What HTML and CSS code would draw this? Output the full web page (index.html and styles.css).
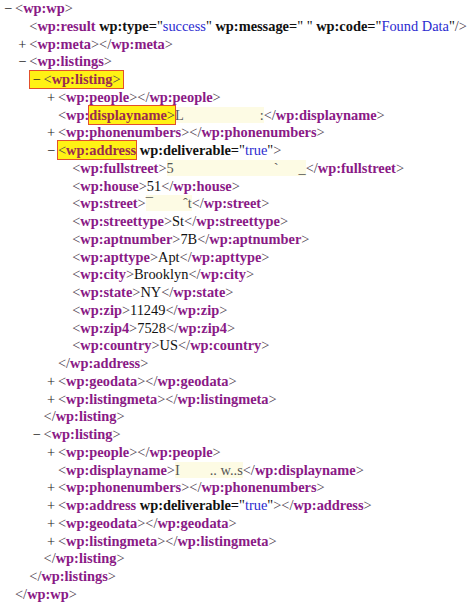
FILE: index.html
```html
<!DOCTYPE html>
<html lang="en">
<head>
    <meta charset="UTF-8">
    <title>wp.xml</title>
    <link rel="stylesheet" href="styles.css">
</head>
<body>
    <div class="tree">
        <div class="ln"><span class="pm">&minus;</span><span class="b">&lt;</span><span class="t">wp:wp</span><span class="b">&gt;</span></div>
        <div class="e">
            <div class="ln"><span class="b">&lt;</span><span class="t">wp:result</span> <span class="a">wp:type</span><span class="a">=</span>"<span class="v">success</span>" <span class="a">wp:message=</span>"&nbsp;" <span class="a">wp:code</span><span class="a">=</span>"<span class="v">Found Data</span>"<span class="b">/&gt;</span></div>
            <div class="ln"><span class="pm">+</span><span class="b">&lt;</span><span class="t">wp:meta</span><span class="b">&gt;&lt;/</span><span class="t">wp:meta</span><span class="b">&gt;</span></div>
            <div class="ln"><span class="pm">&minus;</span><span class="b">&lt;</span><span class="t">wp:listings</span><span class="b">&gt;</span></div>
            <div class="e">
                <div class="ln"><span class="hl lead"><span class="pm">&minus;</span><span class="b">&lt;</span><span class="t">wp:listing</span><span class="b">&gt;</span></span></div>
                <div class="e">
                    <div class="ln"><span class="pm">+</span><span class="b">&lt;</span><span class="t">wp:people</span><span class="b">&gt;&lt;/</span><span class="t">wp:people</span><span class="b">&gt;</span></div>
                    <div class="ln"><span class="b">&lt;</span><span class="t">wp:</span><span class="hl"><span class="t">displayname</span><span class="b">&gt;</span></span><span class="red">L<span class="gap w76"></span>:</span><span class="b">&lt;/</span><span class="t">wp:displayname</span><span class="b">&gt;</span></div>
                    <div class="ln"><span class="pm">+</span><span class="b">&lt;</span><span class="t">wp:phonenumbers</span><span class="b">&gt;&lt;/</span><span class="t">wp:phonenumbers</span><span class="b">&gt;</span></div>
                    <div class="ln"><span class="pm">&minus;</span><span class="hl"><span class="b">&lt;</span><span class="t">wp:address</span></span> <span class="a">wp:deliverable=</span>"<span class="v">true</span>"<span class="b">&gt;</span></div>
                    <div class="e">
                        <div class="ln"><span class="b">&lt;</span><span class="t">wp:fullstreet</span><span class="b">&gt;</span><span class="red">5<span class="gap w100"></span>&#96;<span class="gap w20"></span>_</span><span class="b">&lt;/</span><span class="t">wp:fullstreet</span><span class="b">&gt;</span></div>
                        <div class="ln"><span class="b">&lt;</span><span class="t">wp:house</span><span class="b">&gt;</span>51<span class="b">&lt;/</span><span class="t">wp:house</span><span class="b">&gt;</span></div>
                        <div class="ln"><span class="b">&lt;</span><span class="t">wp:street</span><span class="b">&gt;</span><span class="red">&#175;<span class="gap w30"></span>&#710;t</span><span class="b">&lt;/</span><span class="t">wp:street</span><span class="b">&gt;</span></div>
                        <div class="ln"><span class="b">&lt;</span><span class="t">wp:streettype</span><span class="b">&gt;</span>St<span class="b">&lt;/</span><span class="t">wp:streettype</span><span class="b">&gt;</span></div>
                        <div class="ln"><span class="b">&lt;</span><span class="t">wp:aptnumber</span><span class="b">&gt;</span>7B<span class="b">&lt;/</span><span class="t">wp:aptnumber</span><span class="b">&gt;</span></div>
                        <div class="ln"><span class="b">&lt;</span><span class="t">wp:apttype</span><span class="b">&gt;</span>Apt<span class="b">&lt;/</span><span class="t">wp:apttype</span><span class="b">&gt;</span></div>
                        <div class="ln"><span class="b">&lt;</span><span class="t">wp:city</span><span class="b">&gt;</span>Brooklyn<span class="b">&lt;/</span><span class="t">wp:city</span><span class="b">&gt;</span></div>
                        <div class="ln"><span class="b">&lt;</span><span class="t">wp:state</span><span class="b">&gt;</span>NY<span class="b">&lt;/</span><span class="t">wp:state</span><span class="b">&gt;</span></div>
                        <div class="ln"><span class="b">&lt;</span><span class="t">wp:zip</span><span class="b">&gt;</span>11249<span class="b">&lt;/</span><span class="t">wp:zip</span><span class="b">&gt;</span></div>
                        <div class="ln"><span class="b">&lt;</span><span class="t">wp:zip4</span><span class="b">&gt;</span>7528<span class="b">&lt;/</span><span class="t">wp:zip4</span><span class="b">&gt;</span></div>
                        <div class="ln"><span class="b">&lt;</span><span class="t">wp:country</span><span class="b">&gt;</span>US<span class="b">&lt;/</span><span class="t">wp:country</span><span class="b">&gt;</span></div>
                    </div>
                    <div class="ln"><span class="b">&lt;/</span><span class="t">wp:address</span><span class="b">&gt;</span></div>
                    <div class="ln"><span class="pm">+</span><span class="b">&lt;</span><span class="t">wp:geodata</span><span class="b">&gt;&lt;/</span><span class="t">wp:geodata</span><span class="b">&gt;</span></div>
                    <div class="ln"><span class="pm">+</span><span class="b">&lt;</span><span class="t">wp:listingmeta</span><span class="b">&gt;&lt;/</span><span class="t">wp:listingmeta</span><span class="b">&gt;</span></div>
                </div>
                <div class="ln"><span class="b">&lt;/</span><span class="t">wp:listing</span><span class="b">&gt;</span></div>
                <div class="ln"><span class="pm">&minus;</span><span class="b">&lt;</span><span class="t">wp:listing</span><span class="b">&gt;</span></div>
                <div class="e">
                    <div class="ln"><span class="pm">+</span><span class="b">&lt;</span><span class="t">wp:people</span><span class="b">&gt;&lt;/</span><span class="t">wp:people</span><span class="b">&gt;</span></div>
                    <div class="ln"><span class="b">&lt;</span><span class="t">wp:displayname</span><span class="b">&gt;</span><span class="red">I<span class="gap w30"></span>.. w..s</span><span class="b">&lt;/</span><span class="t">wp:displayname</span><span class="b">&gt;</span></div>
                    <div class="ln"><span class="pm">+</span><span class="b">&lt;</span><span class="t">wp:phonenumbers</span><span class="b">&gt;&lt;/</span><span class="t">wp:phonenumbers</span><span class="b">&gt;</span></div>
                    <div class="ln"><span class="pm">+</span><span class="b">&lt;</span><span class="t">wp:address</span> <span class="a">wp:deliverable=</span>"<span class="v">true</span>"<span class="b">&gt;&lt;/</span><span class="t">wp:address</span><span class="b">&gt;</span></div>
                    <div class="ln"><span class="pm">+</span><span class="b">&lt;</span><span class="t">wp:geodata</span><span class="b">&gt;&lt;/</span><span class="t">wp:geodata</span><span class="b">&gt;</span></div>
                    <div class="ln"><span class="pm">+</span><span class="b">&lt;</span><span class="t">wp:listingmeta</span><span class="b">&gt;&lt;/</span><span class="t">wp:listingmeta</span><span class="b">&gt;</span></div>
                </div>
                <div class="ln"><span class="b">&lt;/</span><span class="t">wp:listing</span><span class="b">&gt;</span></div>
            </div>
            <div class="ln"><span class="b">&lt;/</span><span class="t">wp:listings</span><span class="b">&gt;</span></div>
        </div>
        <div class="ln"><span class="b">&lt;/</span><span class="t">wp:wp</span><span class="b">&gt;</span></div>
    </div>
</body>
</html>
```

FILE: styles.css
```css
body {
    margin: 0;
    background-color: #fff;
    font-family: "Liberation Serif", "Times New Roman", serif;
    font-size: 14.4px;
    color: #111;
}
.tree {
    padding: 0 0 0 15px;
}
.e {
    margin-left: 14.3px;
}
.ln {
    line-height: 17.75px;
    height: 17.75px;
    white-space: nowrap;
}
.pm {
    display: inline-block;
    width: 11px;
    margin-left: -11px;
    color: #222;
}
.b {
    color: #4a3a4a;
}
.t {
    color: #8a1a86;
    font-weight: bold;
}
.a {
    color: #111;
    font-weight: bold;
}
.v {
    color: #2b2bd0;
}
.hl {
    background-color: #fff214;
    outline: 1.5px solid #e2502c;
    padding: 1px 0;
}
.hl .t {
    color: #9a2a50;
}
.hl.lead {
    display: inline-block;
    margin-left: -14px;
    padding: 0 2px 0 3px;
    line-height: 17px;
}
.hl.lead .pm {
    margin-left: 0;
}
.red {
    background-color: #fdfbe4;
    color: #555;
}
.gap {
    display: inline-block;
}
.w20 { width: 20px; }
.w30 { width: 30px; }
.w76 { width: 76px; }
.w100 { width: 100px; }
```
